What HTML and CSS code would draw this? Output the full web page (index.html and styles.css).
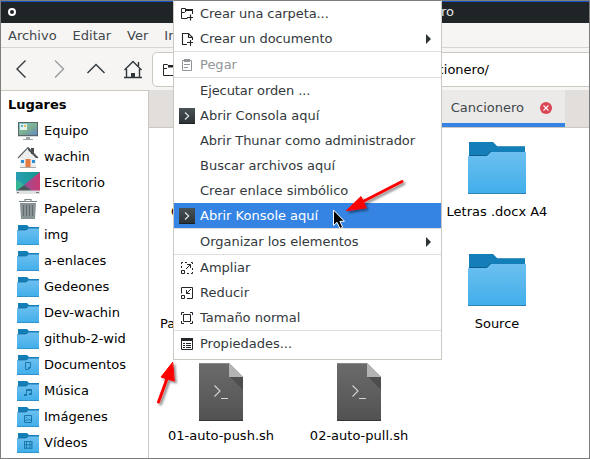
FILE: index.html
```html
<!DOCTYPE html>
<html lang="es">
<head>
<meta charset="utf-8">
<title>Cancionero</title>
<link rel="stylesheet" href="styles.css">
</head>
<body>
<svg class="defs" width="0" height="0">
  <defs>
    <linearGradient id="blue" x1="0" y1="0" x2="0" y2="1"><stop offset="0" stop-color="#6cbfef"/><stop offset="1" stop-color="#40aeea"/></linearGradient>
    <linearGradient id="gray" x1="0" y1="0" x2="0" y2="1"><stop offset="0" stop-color="#6b6b6b"/><stop offset="1" stop-color="#525252"/></linearGradient>
    <linearGradient id="term" x1="0" y1="0" x2="0" y2="1"><stop offset="0" stop-color="#4a5256"/><stop offset="1" stop-color="#2b3134"/></linearGradient>
    <linearGradient id="screen" x1="0" y1="0" x2="1" y2="1"><stop offset="0" stop-color="#7ac6d0"/><stop offset=".5" stop-color="#7fb08f"/><stop offset="1" stop-color="#6189c4"/></linearGradient>
    <linearGradient id="teal" x1="0" y1="0" x2="1" y2="0"><stop offset="0" stop-color="#2d9db4"/><stop offset="1" stop-color="#10998c"/></linearGradient>
    <linearGradient id="pink" x1="0" y1="0" x2="1" y2="0"><stop offset="0" stop-color="#9a4c94"/><stop offset="1" stop-color="#c93b72"/></linearGradient>
    <filter id="shadow" x="-30%" y="-30%" width="170%" height="170%"><feDropShadow dx="2" dy="2" stdDeviation="1.3" flood-color="#000" flood-opacity=".45"/></filter>
  </defs>
  <symbol id="folder-small" viewBox="0 0 22 20">
    <path d="M1 0H10L12 2H22V8H1Z" fill="#147eb8"/>
    <path d="M0 5H9L11 3.500H22V20H0Z" fill="url(#blue)"/>
    <path d="M1 5H9L11 3.500" stroke="#0c6191" stroke-width=".7" fill="none"/>
    <path d="M0 19.500H22" stroke="#3292c9"/>
  </symbol>
  <symbol id="folder-big" viewBox="0 0 58 52">
    <path d="M1 0H25L29 4H57V16H1Z" fill="#147eb8"/>
    <path d="M29 4.500H57" stroke="#4497c5"/>
    <path d="M1 13.500H18.500L22.500 10" stroke="#0c5c8c" fill="none"/>
    <path d="M0 14H19L23 10H58V52H0Z" fill="url(#blue)"/>
    <path d="M0 51.500H58" stroke="#2c86ba"/>
  </symbol>
  <symbol id="script" viewBox="0 0 44 58">
    <path d="M0 0H30L44 14V58H0Z" fill="url(#gray)"/>
    <path d="M31 14H44V27Z" fill="#434343" opacity=".65"/>
    <path d="M30 0L44 14H30Z" fill="#b3b3b3"/>
    <path d="M0 .5H30" stroke="#888"/><path d="M0 57.500H44" stroke="#343434"/>
    <path d="M15.500 22.500L21 28L15.500 33.500M22 35.500H29" fill="none" stroke="#d5d5d5" stroke-width="1.100"/>
  </symbol>
  <symbol id="terminal" viewBox="0 0 16 16">
    <path d="M0 0H16V16H0Z" fill="url(#term)"/><path d="M0 15.500H16" stroke="#1b2022"/>
    <path d="M6 4.500L9.700 8L6 11.500" fill="none" stroke="#e8eaea" stroke-width="1.100"/>
  </symbol>
  <symbol id="new-folder" viewBox="0 0 16 16">
    <path d="M8.500 12.500H2.500V2.500H6.500L7.500 4.500H13.500V8M2.500 6.500H5.500L7.500 4.500" fill="none" stroke="#232629"/>
    <path d="M6 3H14V5H6Z" fill="#232629"/><path d="M8 11.500H14M11.500 8.500V14.500" stroke="#232629" fill="none" stroke-width="1.200"/>
  </symbol>
</svg>
<div class="window">
  <header class="titlebar"><span class="dot"></span><span class="title">Cancionero</span></header>
  <nav class="menubar"><span>Archivo</span><span>Editar</span><span>Ver</span><span>Ir</span></nav>
  <div class="toolbar">
    <svg width="150" height="42" fill="none" stroke="#31363b" stroke-width="1.400">
      <path d="M25.500 12.500L17 21L25.500 29.500"/><path d="M55 12.500L63.500 21L55 29.500" stroke="#999c9d"/>
      <path d="M87.500 25L96 16.500L104.500 25"/>
      <path d="M124.500 22L133 13.500L141.500 22M126.500 21V29.500H139.500V21M138.500 14V18M124 29.500H142"/><path d="M131 30V25H135V30Z" fill="#31363b" stroke="none"/>
    </svg>
    <div class="path">
      <svg width="16" height="16"><path d="M1.500 2.500H5.500L7.500 4.500H14V13.500H1.500ZM1.500 6.500H5" fill="none" stroke="#232629"/><path d="M6 3H14V5.500H6Z" fill="#232629"/></svg>
      <span>Cancionero/</span>
    </div>
  </div>
  <div class="body">
    <aside>
      <h2>Lugares</h2>
      <ul>
        <li><svg width="24" height="22"><path d="M2 2H22V16H2Z" fill="#5b6669"/><path d="M3 3H21V15H3Z" fill="url(#screen)"/><path d="M4 4H11V10H4Z" fill="#e3f3ea"/><path d="M5 5H7V7H5Z" fill="#55b4d6"/><path d="M8 5H10V7H8Z" fill="#e7b656"/><path d="M2 16H22V17H2Z" fill="#d7d9da"/><path d="M10 17H14V19H17V20H7V19H10Z" fill="#a0a5a7"/></svg>Equipo</li>
        <li><svg width="24" height="22"><path d="M4 11L12 3L20 11V21H4Z" fill="#ededed"/><path d="M15 2H18V8H15Z" fill="#454b4e"/><path d="M2 12L12 1.500L22 12" fill="none" stroke="#5b6164" stroke-width="1.200"/><path d="M12 1.500L22 12L20 12L12 4Z" fill="#454b4e"/><path d="M9.500 13H14.500V21H9.500Z" fill="#e27b42"/><path d="M5 14H8V17H5ZM16 14H19V17H16Z" fill="#2590d5"/><path d="M4 21.500H20" stroke="#aaa"/></svg>wachin</li>
        <li><svg width="24" height="22"><path d="M0 0H24V19H0Z" fill="url(#teal)"/><path d="M24 0V19H16L8 13Z" fill="url(#pink)"/><path d="M0 19L8 13L16 19Z" fill="#4b565a"/><path d="M0 19L8 13L3 9L0 8Z" fill="#38b597"/><path d="M0 18.500H24V22H0Z" fill="#dfe1e2"/><path d="M1 20.500H3M20 20.500H23" stroke="#777"/></svg>Escritorio</li>
        <li><svg width="24" height="22"><path d="M3 3.500H21M9 3V1.500H15V3" fill="none" stroke="#7d8688" stroke-width="1.200"/><path d="M4 5H20L19 21H5Z" fill="#899294"/><path d="M7.500 7V18M10.500 7V18M13.500 7V18M16.500 7V18" stroke="#626c6e"/></svg>Papelera</li>
        <li><svg class="folder"><use href="#folder-small"/></svg>img</li>
        <li><svg class="folder"><use href="#folder-small"/></svg>a-enlaces</li>
        <li><svg class="folder"><use href="#folder-small"/></svg>Gedeones</li>
        <li><svg class="folder"><use href="#folder-small"/></svg>Dev-wachin</li>
        <li><svg class="folder"><use href="#folder-small"/></svg>github-2-wid</li>
        <li><svg class="folder"><use href="#folder-small"/><path d="M8.500 7.500H13.500V12.500L11.500 14.500H8.500ZM11.500 14V12.500H13.500" class="mark"/></svg>Documentos</li>
        <li><svg class="folder"><use href="#folder-small"/><path d="M9.500 13.500V8.500H14.500V12.500M9.500 9.500H14.500" class="mark"/><path d="M7 13H10V15H7ZM12 12H15V14H12Z" fill="#1c78aa"/></svg>Música</li>
        <li><svg class="folder"><use href="#folder-small"/><path d="M7.500 8.500H14.500V15.500H7.500ZM8 14.500L10 12.500L11 13.500L12.500 12L14.500 14.500M9 10.500H10" class="mark"/></svg>Imágenes</li>
        <li><svg class="folder"><use href="#folder-small"/><path d="M7.500 8V16M9.500 8V16M13 8V16M15 8V16M7.500 8.500H15M7.500 11.800H15M7.500 15.200H15" class="mark"/></svg>Vídeos</li>
      </ul>
    </aside>
    <main>
      <div class="tabs">
        <div class="tab"><span>Cancionero</span><svg width="12" height="12"><circle cx="6" cy="6" r="6" fill="#da4453"/><path d="M3.500 3.500L8.500 8.500M8.500 3.500L3.500 8.500" stroke="#fff" stroke-width="1.100"/></svg></div>
      </div>
      <div class="files">
        <div class="file cut first">C</div><div></div>
        <div class="file"><svg width="58" height="52"><use href="#folder-big"/></svg><span>Letras .docx A4</span></div>
        <div class="file cut">Pa</div><div></div>
        <div class="file"><svg width="58" height="52"><use href="#folder-big"/></svg><span>Source</span></div>
        <div class="file script"><svg width="44" height="58"><use href="#script"/></svg><span>01-auto-push.sh</span></div>
        <div class="file script"><svg width="44" height="58"><use href="#script"/></svg><span>02-auto-pull.sh</span></div>
      </div>
    </main>
  </div>
</div>
<div class="context">
  <div class="item tight"><svg class="ico"><use href="#new-folder"/></svg>Crear una carpeta...</div>
  <div class="item tight"><svg class="ico"><path d="M8 13.500H3.500V2.500H9.500L13.500 6.500V9M9.500 2.500V6.500H13.500M8 11.500H14M11.500 9V15" fill="none" stroke="#232629" stroke-width="1.100"/></svg>Crear un documento<i></i></div>
  <hr>
  <div class="item off"><svg class="ico"><path d="M3.500 3.500H12.500V13.500H3.500ZM5 7.500H11M5 10.500H9" fill="none" stroke="#929597"/><path d="M5 2H11V5H5Z" fill="#929597"/></svg>Pegar</div>
  <hr>
  <div class="item tight"><svg class="ico"></svg>Ejecutar orden ...</div>
  <div class="item"><svg class="ico"><use href="#terminal"/></svg>Abrir Consola aquí</div>
  <div class="item thunar"><svg class="ico"></svg>Abrir Thunar como administrador</div>
  <div class="item"><svg class="ico"></svg>Buscar archivos aquí</div>
  <div class="item"><svg class="ico"></svg>Crear enlace simbólico</div>
  <div class="item selected"><svg class="ico"><use href="#terminal"/></svg>Abrir Konsole aquí</div>
  <hr>
  <div class="item"><svg class="ico"></svg>Organizar los elementos<i></i></div>
  <hr>
  <div class="item"><svg class="ico line"><path d="M2.500 10.500H5.500V13.500H2.500ZM2.500 8V6M2.500 4V2.500H4M6 2.500H8M12 2.500H13.500V4M13.500 8V10M13.500 12V13.500H12M10 13.500H8M7 9L11.500 4.500M8 4.500H11.500V8"/></svg>Ampliar</div>
  <div class="item"><svg class="ico line"><path d="M2.500 10.500H5.500V13.500H2.500ZM2.500 8.500V2.500H13.500V13.500H8M12 4L7.500 8.500M7.500 5V8.500H11"/></svg>Reducir</div>
  <div class="item"><svg class="ico line"><path d="M4.500 4.500H11.500V11.500H4.500ZM2.500 5V2.500H5M11 2.500H13.500V5M2.500 11V13.500H5M11 13.500H13.500V11"/></svg>Tamaño normal</div>
  <hr>
  <div class="item"><svg class="ico line"><path d="M2.500 3.500H13.500V13.500H2.500ZM4 7.500H6M4 9.500H6M4 11.500H6M7 7.500H12M7 9.500H12M7 11.500H12"/><path d="M2 2H14V5H2Z" fill="#232629" stroke="none"/></svg>Propiedades...</div>
</div>
<svg class="overlay" width="590" height="459">
  <g filter="url(#shadow)" fill="red" stroke="red" stroke-linecap="round">
    <path d="M402 181.500L362 202" stroke-width="3"/><path d="M346.500 210.500L361 196.500L366 207.500Z"/>
    <path d="M158.500 402L168 376" stroke-width="3"/><path d="M172.500 362.500L161 377L174 381Z"/>
  </g>
  <path d="M333.500 210V225.500L337 222.300L340 228.500L342.700 227.200L339.900 221.300H344.500Z" fill="#000" stroke="#fff"/>
</svg>
</body>
</html>
```
FILE: styles.css
```css
* { box-sizing: border-box; }
body { margin: 0; width: 590px; height: 459px; overflow: hidden; background: #fff; font: 13px/16px "DejaVu Sans", sans-serif; color: #000; }
svg { display: block; flex: none; }
.defs { position: absolute; }
.window { width: 590px; height: 459px; border: 1px solid #7d7d7d; display: flex; flex-direction: column; overflow: hidden; }
.titlebar { height: 22px; flex: none; background: #1f2427; border-top: 1px solid #1a51c0; display: flex; align-items: center; justify-content: space-between; padding: 0 135px 1px 7px; color: #fff; }
.dot { width: 8px; height: 8px; border: 2px solid #fff; border-radius: 50%; }
.title { color: #e4e6e6; }
.menubar { height: 25px; flex: none; background: #f6f5f4; border-bottom: 1px solid #d8d4d0; display: flex; align-items: center; gap: 16px; padding: 1px 0 0 7px; color: #41474b; }
.toolbar { height: 42px; flex: none; background: #f6f5f4; display: flex; align-items: flex-start; }
.toolbar > svg { margin-left: -1px; }
.path { margin: 4px -8px 0 2px; flex: 1; height: 35px; border: 1px solid #cdc7c2; border-radius: 5px; background: #fff; display: flex; align-items: center; justify-content: space-between; padding: 0 107px 0 9px; }
.body { flex: 1; display: flex; min-height: 0; }
aside { width: 148px; flex: none; border-top: 1px solid #cdc7c2; border-right: 1px solid #cdc7c2; overflow: hidden; }
h2 { font-size: 13px; line-height: 16px; margin: 6px 0 5px 7px; }
ul { margin: 0; padding: 0; list-style: none; }
li { height: 26px; display: flex; align-items: center; padding-left: 15px; gap: 4px; white-space: nowrap; }
.folder { width: 22px; height: 20px; margin: 0 1px; }
.mark { fill: none; stroke: #1c78aa; stroke-width: 1; }
main { flex: 1; min-width: 0; }
.tabs { height: 38px; background: #e1dedb; border-bottom: 1px solid #cdc7c2; display: flex; padding-left: 140px; }
.tab { width: 276px; display: flex; align-items: center; justify-content: flex-end; gap: 16px; padding-right: 13px; padding-top: 3px; background: #ebeae9; border-bottom: 4px solid #3584e4; color: #41474b; }
.files { display: grid; grid-template-columns: repeat(3, 138px); grid-auto-rows: 112px; padding: 14px 0 0 3px; }
.file { display: flex; flex-direction: column; align-items: center; white-space: nowrap; }
.file span { margin-top: 10px; }
.file.script svg { margin-top: -3px; }
.file.script span { margin-top: 7px; }
.file.cut { align-items: flex-start; padding: 62px 0 0 8px; }
.file.cut.first { padding-left: 19px; }
.context { position: absolute; left: 173px; top: 0; width: 269px; height: 360px; background: #fff; border: 1px solid #cdc7c2; border-top-color: #7d7d7d; color: #33393c; }
.item { height: 25px; display: flex; align-items: center; gap: 5px; padding-left: 5px; white-space: nowrap; }
.tight { letter-spacing: -.08px; }
.thunar { letter-spacing: -.05px; }
.ico { width: 16px; height: 16px; }
.line { fill: none; stroke: #232629; }
.item i { margin: 0 10px 0 auto; border: solid transparent; border-width: 5px 0 5px 5px; border-left-color: #2e3436; }
.off { color: #929597; }
.selected { background: #3584e4; color: #fff; }
hr { margin: 0; border: 0; height: 1px; background: #dfdfdf; }
.overlay { position: absolute; left: 0; top: 0; }
```
